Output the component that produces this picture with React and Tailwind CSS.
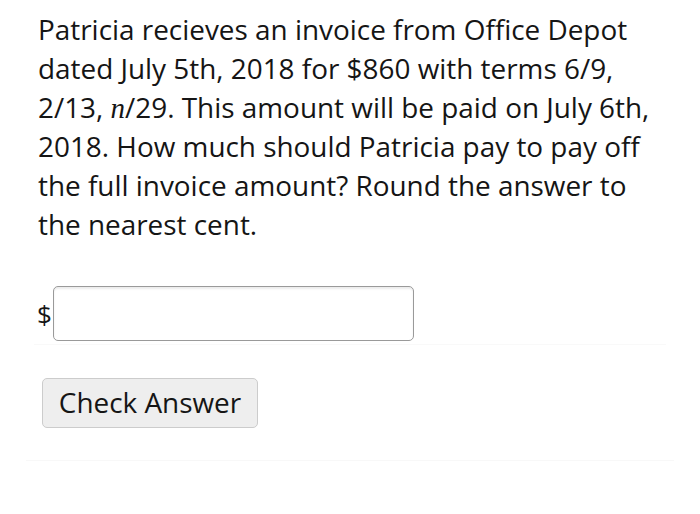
export default function App() {
  return (
    <div className="w-[700px] h-[514px] bg-white text-[#151515] font-['Open_Sans',sans-serif] overflow-hidden">
      <div className="pl-[38px] pt-[10px]">
        <p className="text-[27.9px] leading-[38.8px] whitespace-nowrap">
          Patricia recieves an invoice from Office Depot
          <br />
          dated July 5th, 2018 for $860 with terms 6/9,
          <br />
          2/13, <span className="font-['Liberation_Serif',serif] italic text-[29px]">n</span>/29. This amount will be paid on July 6th,
          <br />
          2018. How much should Patricia pay to pay off
          <br />
          the full invoice amount? Round the answer to
          <br />
          the nearest cent.
        </p>
      </div>

      <div className="mt-[42px] pl-[37px] flex items-center">
        <span className="text-[26px] leading-none mt-[2px]">$</span>
        <input
          type="text"
          className="ml-[1px] w-[361px] h-[55px] border-[1.5px] border-[#9a9a9a] rounded-[5px] bg-white shadow-[inset_0_2px_2px_rgba(0,0,0,0.08)] outline-none"
        />
      </div>
      <div className="mt-[3px] mx-[34px] h-px bg-[#f9f9f9]" />

      <div className="mt-[33px] pl-[42px]">
        <button className="w-[216px] h-[50px] bg-[#eeeeee] border border-[#cccccc] rounded-[5px] text-[27.9px] text-[#151515]">
          Check Answer
        </button>
      </div>
      <div className="mt-[32px] mx-[26px] h-px bg-[#f8f8f8]" />
    </div>
  );
}
